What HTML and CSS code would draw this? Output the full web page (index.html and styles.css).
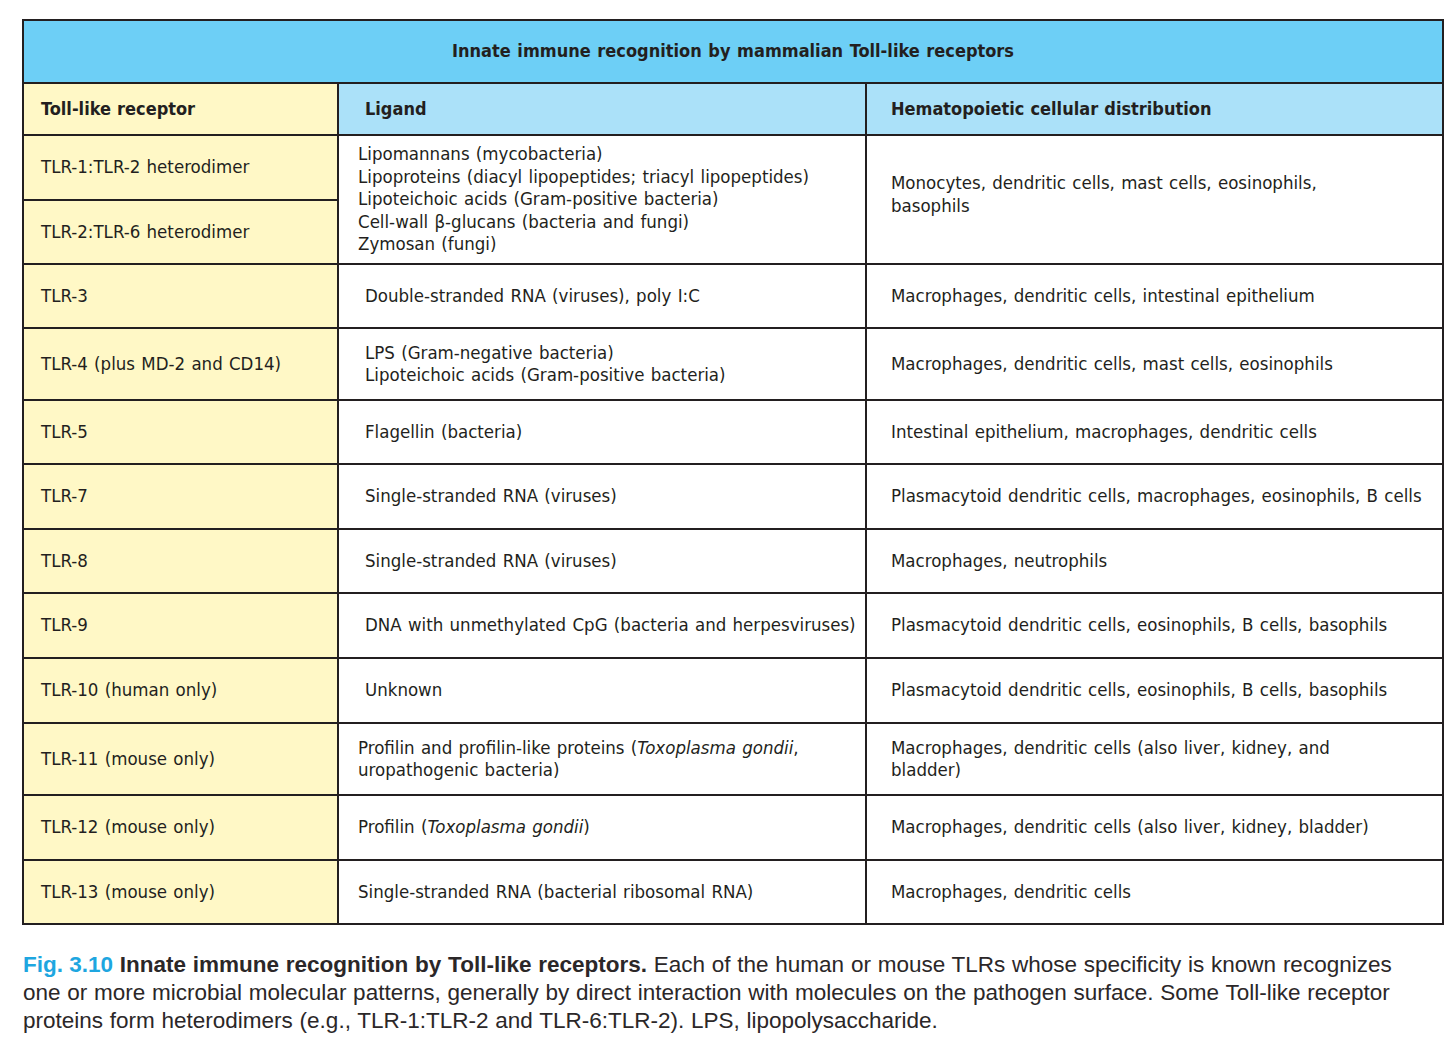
FILE: index.html
```html
<!DOCTYPE html>
<html lang="en">
<head>
<meta charset="utf-8">
<title>Innate immune recognition by mammalian Toll-like receptors</title>
<link rel="stylesheet" href="styles.css">
</head>
<body>
<div class="figure">
  <table class="tlr">
    <colgroup>
      <col class="c1">
      <col class="c2">
      <col class="c3">
    </colgroup>
    <thead>
      <tr class="title-row"><th colspan="3">Innate immune recognition by mammalian Toll-like receptors</th></tr>
      <tr class="head-row">
        <th class="rec">Toll-like receptor</th>
        <th class="lig">Ligand</th>
        <th class="dist">Hematopoietic cellular distribution</th>
      </tr>
    </thead>
    <tbody>
      <tr class="h65">
        <td class="rec">TLR-1:TLR-2 heterodimer</td>
        <td class="lig tight" rowspan="2">Lipomannans (mycobacteria)<br>Lipoproteins (diacyl lipopeptides; triacyl lipopeptides)<br>Lipoteichoic acids (Gram-positive bacteria)<br>Cell-wall β-glucans (bacteria and fungi)<br>Zymosan (fungi)</td>
        <td class="dist up" rowspan="2">Monocytes, dendritic cells, mast cells, eosinophils,<br>basophils</td>
      </tr>
      <tr class="h64">
        <td class="rec">TLR-2:TLR-6 heterodimer</td>
      </tr>
      <tr class="h64">
        <td class="rec">TLR-3</td>
        <td class="lig">Double-stranded RNA (viruses), poly I:C</td>
        <td class="dist">Macrophages, dendritic cells, intestinal epithelium</td>
      </tr>
      <tr class="h72">
        <td class="rec">TLR-4 (plus MD-2 and CD14)</td>
        <td class="lig">LPS (Gram-negative bacteria)<br>Lipoteichoic acids (Gram-positive bacteria)</td>
        <td class="dist">Macrophages, dendritic cells, mast cells, eosinophils</td>
      </tr>
      <tr class="h64">
        <td class="rec">TLR-5</td>
        <td class="lig">Flagellin (bacteria)</td>
        <td class="dist">Intestinal epithelium, macrophages, dendritic cells</td>
      </tr>
      <tr class="h65">
        <td class="rec">TLR-7</td>
        <td class="lig">Single-stranded RNA (viruses)</td>
        <td class="dist">Plasmacytoid dendritic cells, macrophages, eosinophils, B cells</td>
      </tr>
      <tr class="h64">
        <td class="rec">TLR-8</td>
        <td class="lig">Single-stranded RNA (viruses)</td>
        <td class="dist">Macrophages, neutrophils</td>
      </tr>
      <tr class="h65">
        <td class="rec">TLR-9</td>
        <td class="lig">DNA with unmethylated CpG (bacteria and herpesviruses)</td>
        <td class="dist">Plasmacytoid dendritic cells, eosinophils, B cells, basophils</td>
      </tr>
      <tr class="h65">
        <td class="rec">TLR-10 (human only)</td>
        <td class="lig">Unknown</td>
        <td class="dist">Plasmacytoid dendritic cells, eosinophils, B cells, basophils</td>
      </tr>
      <tr class="h72">
        <td class="rec">TLR-11 (mouse only)</td>
        <td class="lig tight">Profilin and profilin-like proteins (<i>Toxoplasma gondii</i>,<br>uropathogenic bacteria)</td>
        <td class="dist">Macrophages, dendritic cells (also liver, kidney, and<br>bladder)</td>
      </tr>
      <tr class="h65">
        <td class="rec">TLR-12 (mouse only)</td>
        <td class="lig tight">Profilin (<i>Toxoplasma gondii</i>)</td>
        <td class="dist">Macrophages, dendritic cells (also liver, kidney, bladder)</td>
      </tr>
      <tr class="h64">
        <td class="rec">TLR-13 (mouse only)</td>
        <td class="lig tight">Single-stranded RNA (bacterial ribosomal RNA)</td>
        <td class="dist">Macrophages, dendritic cells</td>
      </tr>
    </tbody>
  </table>
  <p class="caption"><span class="fig">Fig. 3.10</span> <b>Innate immune recognition by Toll-like receptors.</b> Each of the human or mouse TLRs whose specificity is known recognizes one or more microbial molecular patterns, generally by direct interaction with molecules on the pathogen surface. Some Toll-like receptor proteins form heterodimers (e.g., TLR-1:TLR-2 and TLR-6:TLR-2). LPS, lipopolysaccharide.</p>
</div>
</body>
</html>
```

FILE: styles.css
```css
html, body {
  margin: 0;
  padding: 0;
  background: #ffffff;
}

.figure {
  padding: 19px 14px 0 22px;
}

.tlr {
  width: 1420px;
  border-collapse: collapse;
  table-layout: fixed;
  font-family: "DejaVu Sans Condensed", "Liberation Sans", sans-serif;
  font-size: 18.5px;
  line-height: 22.5px;
  color: #231f20;
  word-spacing: 1px;
}

.tlr col.c1 { width: 315px; }
.tlr col.c2 { width: 528px; }
.tlr col.c3 { width: 577px; }

.tlr th,
.tlr td {
  border: 2px solid #231f20;
  vertical-align: middle;
  text-align: left;
  padding: 0;
  white-space: nowrap;
}

.title-row th {
  height: 61px;
  background: #6dcff6;
  text-align: center;
  font-size: 18px;
  font-weight: bold;
  word-spacing: 1px;
  padding-left: 0;
}

.head-row th {
  height: 50px;
  background: #abe1f9;
  font-size: 18px;
  font-weight: bold;
  word-spacing: 0.5px;
}

.tlr .rec {
  background: #fff8c6;
  padding-left: 17px;
}

.tlr .lig {
  padding-left: 26px;
}

.tlr .lig.tight {
  padding-left: 19px;
}

.tlr .dist {
  padding-left: 24px;
}

.tlr .dist.up {
  padding-bottom: 10px;
}

.h64 td { height: 62px; }
.h65 td { height: 63px; }
.h72 td { height: 70px; }

.tlr i {
  font-style: italic;
}

.caption {
  margin: 26px 0 0 1px;
  width: 1412px;
  font-family: "Liberation Sans", Arial, sans-serif;
  font-size: 22.5px;
  line-height: 28px;
  color: #2b2728;
  word-spacing: 0.5px;
}

.caption .fig {
  color: #1ea6e0;
  font-weight: bold;
  word-spacing: 0;
}

.caption b {
  font-weight: bold;
}
```
